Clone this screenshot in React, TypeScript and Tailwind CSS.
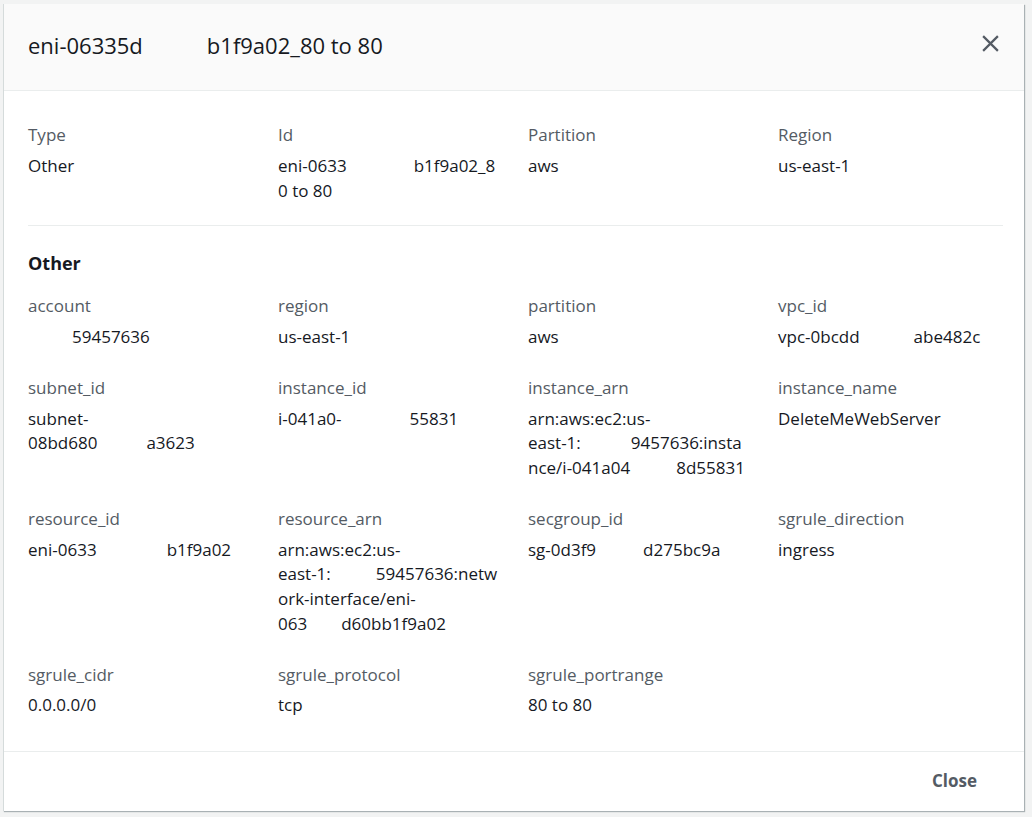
import React from "react";

type Part = string | { gap: number };
type Field = { label: string; lines: Part[][] };

// blank space where the screenshot had redacted characters
const gap = (w: number) => ({ gap: w });

const top: Field[] = [
  { label: "Type", lines: [["Other"]] },
  { label: "Id", lines: [["eni-0633", gap(67), "b1f9a02_8"], ["0 to 80"]] },
  { label: "Partition", lines: [["aws"]] },
  { label: "Region", lines: [["us-east-1"]] },
];

const other: Field[] = [
  { label: "account", lines: [[gap(44), "59457636"]] },
  { label: "region", lines: [["us-east-1"]] },
  { label: "partition", lines: [["aws"]] },
  { label: "vpc_id", lines: [["vpc-0bcdd", gap(54), "abe482c"]] },
  { label: "subnet_id", lines: [["subnet-"], ["08bd680", gap(49), "a3623"]] },
  { label: "instance_id", lines: [["i-041a0-", gap(68), "55831"]] },
  {
    label: "instance_arn",
    lines: [["arn:aws:ec2:us-"], ["east-1:", gap(50), "9457636:insta"], ["nce/i-041a04", gap(46), "8d55831"]],
  },
  { label: "instance_name", lines: [["DeleteMeWebServer"]] },
  { label: "resource_id", lines: [["eni-0633", gap(70), "b1f9a02"]] },
  {
    label: "resource_arn",
    lines: [["arn:aws:ec2:us-"], ["east-1:", gap(45), "59457636:netw"], ["ork-interface/eni-"], ["063", gap(34), "d60bb1f9a02"]],
  },
  { label: "secgroup_id", lines: [["sg-0d3f9", gap(47), "d275bc9a"]] },
  { label: "sgrule_direction", lines: [["ingress"]] },
  { label: "sgrule_cidr", lines: [["0.0.0.0/0"]] },
  { label: "sgrule_protocol", lines: [["tcp"]] },
  { label: "sgrule_portrange", lines: [["80 to 80"]] },
];

function Cell({ field }: { field: Field }) {
  return (
    <div>
      <div className="text-[#545b64] leading-[24.75px]">{field.label}</div>
      <div className="mt-[6px] text-[#16191f] leading-[24.75px]">
        {field.lines.map((line, i) => (
          <div key={i} className="whitespace-nowrap">
            {line.map((p, j) =>
              typeof p === "string" ? (
                <span key={j}>{p}</span>
              ) : (
                <span key={j} className="inline-block" style={{ width: p.gap }} />
              )
            )}
          </div>
        ))}
      </div>
    </div>
  );
}

export default function App() {
  return (
    <div
      className="min-h-screen bg-[#f2f3f3] pt-[4px] pl-[3px] text-[17px]"
      style={{ fontFamily: '"Open Sans", "Noto Sans", Arial, sans-serif' }}
    >
      <div className="w-[1021px] bg-white border-l border-[#d5dbdb] shadow-[1px_1px_1px_0_rgba(0,28,36,0.3)]">
        {/* Header */}
        <div className="h-[87px] flex items-center justify-between pl-[24px] pr-[22px] bg-[#fafafa] border-b border-[#eaeded]">
          <h1 className="text-[22px] text-[#16191f] leading-[28px] -mt-[4px]">
            eni-06335d<span className="inline-block w-[64px]" />b1f9a02_80 to 80
          </h1>
          <button className="w-[24px] h-[24px] flex items-center justify-center text-[#545b64] -mt-[8px]">
            <svg width="19" height="19" viewBox="0 0 18 18" fill="none" stroke="currentColor" strokeWidth="2.1">
              <path d="M2 2l14 14M16 2L2 16" />
            </svg>
          </button>
        </div>

        {/* Body */}
        <div className="pl-[24px] pr-[21px] pt-[32px] pb-[33px]">
          <div className="grid grid-cols-4 gap-x-[25px]">
            {top.map((f) => (
              <Cell key={f.label} field={f} />
            ))}
          </div>
          <div className="mt-[22px] border-t border-[#eaeded]" />
          <h2 className="mt-[26px] text-[18px] leading-[22px] font-bold text-[#16191f]">Other</h2>
          <div className="mt-[20px] grid grid-cols-4 gap-x-[25px] gap-y-[26px]">
            {other.map((f) => (
              <Cell key={f.label} field={f} />
            ))}
          </div>
        </div>

        {/* Footer */}
        <div className="h-[60px] border-t border-[#eaeded] flex items-center justify-end pr-[27px]">
          <button className="px-[20px] font-bold text-[#545b64] leading-[22px] -mt-[2px]">Close</button>
        </div>
      </div>
    </div>
  );
}
